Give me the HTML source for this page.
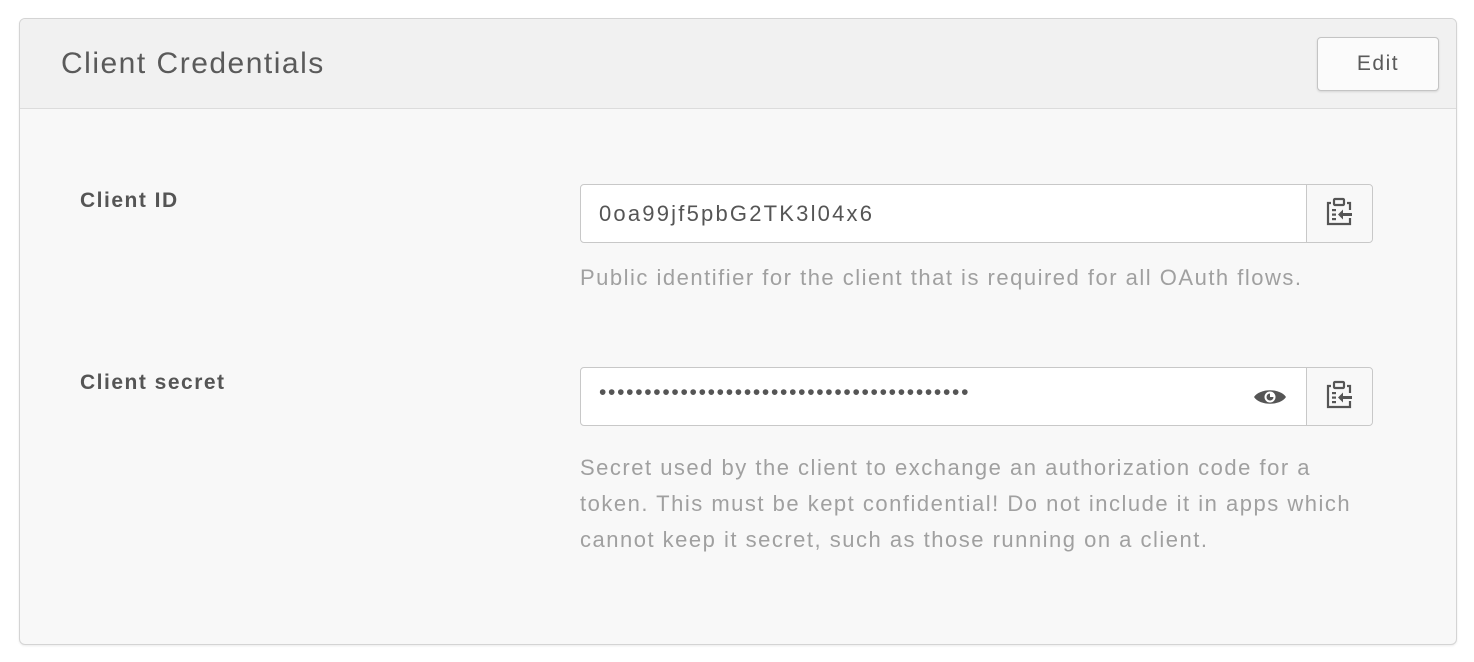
<!DOCTYPE html>
<html><head><style>
body{margin:0;background:#fff;font-family:"Liberation Sans",sans-serif;}
.panel{position:absolute;left:19px;top:18px;width:1436px;height:625px;border:1px solid #d4d4d4;border-radius:6px;background:#f8f8f8;box-shadow:0 1px 2px rgba(0,0,0,.08);overflow:hidden}
.hdr{height:89px;background:#f1f1f1;border-bottom:1px solid #dcdcdc;position:relative}
.hdr h2{margin:0;position:absolute;left:41px;top:28px;font-size:30px;font-weight:normal;color:#5a5a5a;letter-spacing:1.5px}
.edit{position:absolute;left:1297px;top:18px;width:120px;height:52px;border:1px solid #c4c4c4;border-radius:4px;background:#fbfbfb;box-shadow:0 1px 2px rgba(0,0,0,.12);font-size:21px;color:#5a5a5a;text-align:center;line-height:52px;letter-spacing:1.5px}
.lbl{position:absolute;left:80px;font-size:21px;font-weight:bold;color:#555;letter-spacing:1.5px}
.inp{position:absolute;left:580px;width:791px;height:57px;border:1px solid #c8c8c8;border-radius:4px;background:#fff}
.inp .t{position:absolute;left:18px;top:16px;font-size:22px;color:#555;letter-spacing:2.2px}
.cp{position:absolute;right:0;top:0;width:65px;height:57px;border-left:1px solid #c8c8c8;background:#f8f8f8;border-radius:0 4px 4px 0}
.help{position:absolute;left:580px;font-size:22px;color:#a0a0a0;line-height:36px;letter-spacing:1.5px}
</style></head><body>
<div class="panel">
<div class="hdr"><h2>Client Credentials</h2><div class="edit">Edit</div></div>
</div>
<div class="lbl" style="top:189px">Client ID</div>
<div class="inp" style="top:184px"><div class="t">0oa99jf5pbG2TK3l04x6</div>
<div class="cp"><svg width="65" height="57" viewBox="0 0 65 57"><g fill="none" stroke="#555" stroke-width="2.2"><path d="M24 18h-3v21h22v-6M43 25v-7h-3"/><rect x="27" y="14" width="10" height="6" rx="1"/></g><g fill="#555"><rect x="25" y="24" width="4" height="2.2"/><rect x="25" y="28.5" width="4" height="2.2"/><rect x="25" y="33" width="4" height="2.2"/><path d="M31 29.5l5-5v3.5h9v3h-9v3.5z"/></g></svg></div></div>
<div class="help" style="top:260px">Public identifier for the client that is required for all OAuth flows.</div>
<div class="lbl" style="top:371px">Client secret</div>
<div class="inp" style="top:367px"><div class="t" style="top:13px;font-size:21px;letter-spacing:1.7px">•••••••••••••••••••••••••••••••••••••••••</div>
<svg style="position:absolute;left:672px;top:19px" width="34" height="20" viewBox="0 0 34 20"><path d="M1 10C7 1 27 1 33 10C27 19 7 19 1 10z" fill="#555"/><circle cx="17" cy="10" r="5.5" fill="#fff"/><circle cx="17" cy="10" r="3.5" fill="#555"/><rect x="17" y="6" width="4" height="4" fill="#fff"/></svg>
<div class="cp"><svg width="65" height="57" viewBox="0 0 65 57"><g fill="none" stroke="#555" stroke-width="2.2"><path d="M24 18h-3v21h22v-6M43 25v-7h-3"/><rect x="27" y="14" width="10" height="6" rx="1"/></g><g fill="#555"><rect x="25" y="24" width="4" height="2.2"/><rect x="25" y="28.5" width="4" height="2.2"/><rect x="25" y="33" width="4" height="2.2"/><path d="M31 29.5l5-5v3.5h9v3h-9v3.5z"/></g></svg></div></div>
<div class="help" style="top:450px">Secret used by the client to exchange an authorization code for a<br>token. This must be kept confidential! Do not include it in apps which<br>cannot keep it secret, such as those running on a client.</div>
</body></html>
